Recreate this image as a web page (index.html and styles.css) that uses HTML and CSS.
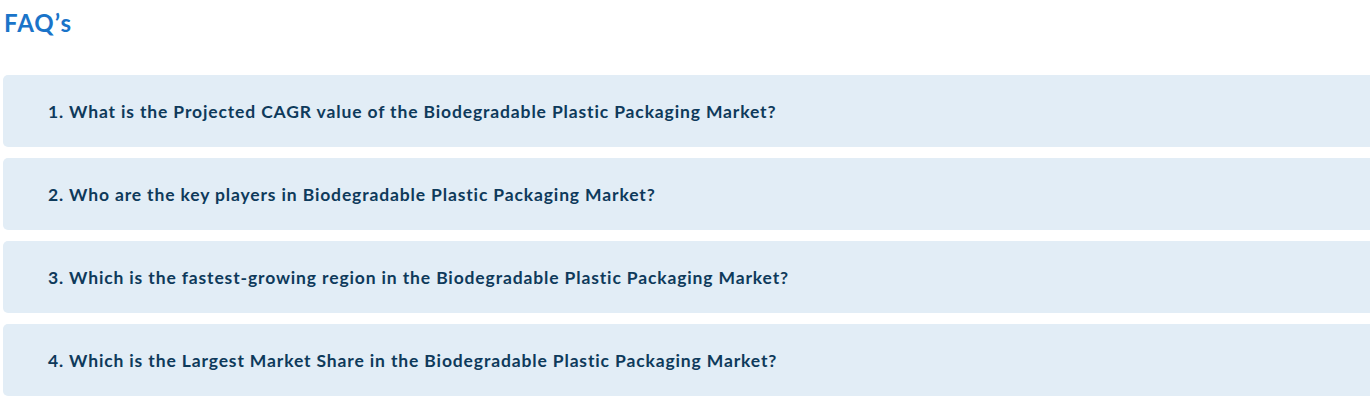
FILE: index.html
```html
<!DOCTYPE html>
<html>
<head>
  <title>FAQ's</title>
  <meta charset="UTF-8">
  <link rel="stylesheet" href="styles.css">
</head>
<body>

<h2 class="faq-title">FAQ’s</h2>

<div class="faq-list">
  <div class="faq-item">1. What is the Projected CAGR value of the Biodegradable Plastic Packaging Market?</div>
  <div class="faq-item">2. Who are the key players in Biodegradable Plastic Packaging Market?</div>
  <div class="faq-item">3. Which is the fastest-growing region in the Biodegradable Plastic Packaging Market?</div>
  <div class="faq-item">4. Which is the Largest Market Share in the Biodegradable Plastic Packaging Market?</div>
</div>

</body>
</html>
```

FILE: styles.css
```css
body {
    margin: 0;
    padding: 0 0 0 3px;
    background-color: white;
    font-family: Lato, "Open Sans", sans-serif;
    overflow: hidden;
}
.faq-title {
    margin: 0;
    padding: 8px 0 0 1px;
    height: 75px;
    box-sizing: border-box;
    font-size: 24px;
    font-weight: 700;
    letter-spacing: 1px;
    color: #1a74c9;
}
.faq-list {
    display: flex;
    flex-direction: column;
    gap: 11px;
    width: 1380px;
}
.faq-item {
    height: 72px;
    box-sizing: border-box;
    display: flex;
    align-items: center;
    padding-left: 45px;
    background-color: #e2edf6;
    border-radius: 5px;
    color: #0e3a5b;
    font-size: 17.5px;
    font-weight: 700;
    letter-spacing: 0.86px;
}
```
